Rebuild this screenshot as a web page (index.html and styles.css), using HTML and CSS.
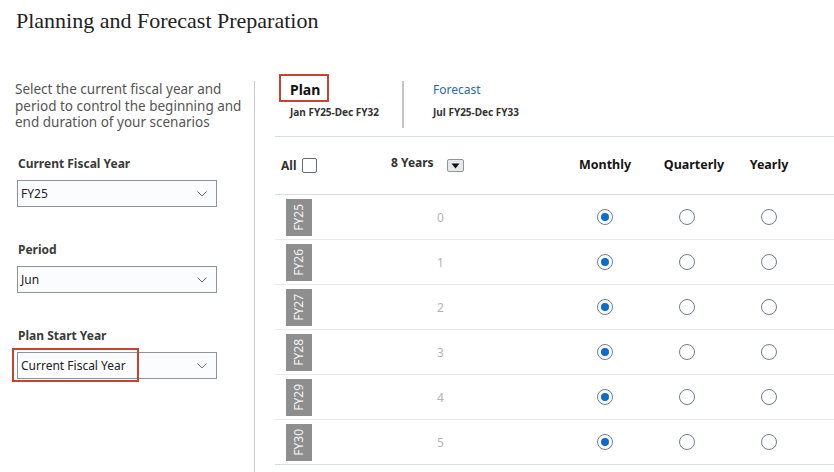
FILE: index.html
```html
<!DOCTYPE html>
<html>
<head>
<meta charset="utf-8">
<link rel="stylesheet" href="styles.css">
</head>
<body>
<h1 class="title">Planning and Forecast Preparation</h1>
<div class="main">
  <div class="left">
    <p class="desc">Select the current fiscal year and period to control the beginning and end duration of your scenarios</p>
    <div class="field">
      <div class="label">Current Fiscal Year</div>
      <div class="select"><span>FY25</span><svg class="chev" width="10" height="6" viewBox="0 0 10 6"><path d="M0.5 0.5 L5 5 L9.5 0.5" fill="none" stroke="#707070" stroke-width="1"/></svg></div>
    </div>
    <div class="field">
      <div class="label">Period</div>
      <div class="select"><span>Jun</span><svg class="chev" width="10" height="6" viewBox="0 0 10 6"><path d="M0.5 0.5 L5 5 L9.5 0.5" fill="none" stroke="#707070" stroke-width="1"/></svg></div>
    </div>
    <div class="field">
      <div class="label">Plan Start Year</div>
      <div class="select marked"><span>Current Fiscal Year</span><svg class="chev" width="10" height="6" viewBox="0 0 10 6"><path d="M0.5 0.5 L5 5 L9.5 0.5" fill="none" stroke="#707070" stroke-width="1"/></svg><div class="redbox sel-box"></div></div>
    </div>
  </div>
  <div class="right">
    <div class="tabs">
      <div class="tab tab-plan">
        <div class="tab-title plan">Plan<div class="redbox plan-box"></div></div>
        <div class="tab-sub">Jan FY25-Dec FY32</div>
      </div>
      <div class="tab-sep"></div>
      <div class="tab tab-fc">
        <div class="tab-title fc">Forecast</div>
        <div class="tab-sub">Jul FY25-Dec FY33</div>
      </div>
    </div>
    <div class="grid">
      <div class="row head">
        <div class="c1"><span class="all">All</span><span class="checkbox"></span></div>
        <div class="c2"><span class="yrs">8 Years</span><span class="ddbtn"><svg width="9" height="6" viewBox="0 0 9 6"><path d="M0.5 0.5 H8.5 L4.5 5.5 Z" fill="#111"/></svg></span></div>
        <div class="c3"></div>
        <div class="cr h">Monthly</div>
        <div class="cr h quarter">Quarterly</div>
        <div class="cr h">Yearly</div>
        <div></div>
      </div>
      <div class="row">
        <div class="c1"><span class="badge"><span>FY25</span></span></div>
        <div class="c2 num">0</div><div class="c3"></div>
        <div class="cr"><span class="radio on"></span></div>
        <div class="cr"><span class="radio"></span></div>
        <div class="cr"><span class="radio"></span></div><div></div>
      </div>
      <div class="row">
        <div class="c1"><span class="badge"><span>FY26</span></span></div>
        <div class="c2 num">1</div><div class="c3"></div>
        <div class="cr"><span class="radio on"></span></div>
        <div class="cr"><span class="radio"></span></div>
        <div class="cr"><span class="radio"></span></div><div></div>
      </div>
      <div class="row">
        <div class="c1"><span class="badge"><span>FY27</span></span></div>
        <div class="c2 num">2</div><div class="c3"></div>
        <div class="cr"><span class="radio on"></span></div>
        <div class="cr"><span class="radio"></span></div>
        <div class="cr"><span class="radio"></span></div><div></div>
      </div>
      <div class="row">
        <div class="c1"><span class="badge"><span>FY28</span></span></div>
        <div class="c2 num">3</div><div class="c3"></div>
        <div class="cr"><span class="radio on"></span></div>
        <div class="cr"><span class="radio"></span></div>
        <div class="cr"><span class="radio"></span></div><div></div>
      </div>
      <div class="row">
        <div class="c1"><span class="badge"><span>FY29</span></span></div>
        <div class="c2 num">4</div><div class="c3"></div>
        <div class="cr"><span class="radio on"></span></div>
        <div class="cr"><span class="radio"></span></div>
        <div class="cr"><span class="radio"></span></div><div></div>
      </div>
      <div class="row last">
        <div class="c1"><span class="badge"><span>FY30</span></span></div>
        <div class="c2 num">5</div><div class="c3"></div>
        <div class="cr"><span class="radio on"></span></div>
        <div class="cr"><span class="radio"></span></div>
        <div class="cr"><span class="radio"></span></div><div></div>
      </div>
    </div>
  </div>
</div>
</body>
</html>
```
FILE: styles.css
```css
html, body {
  margin: 0;
  padding: 0;
  background: #fff;
  overflow: hidden;
}
body {
  width: 834px;
  height: 472px;
  font-family: "Noto Sans", "Open Sans", sans-serif;
  color: #333;
}
.title {
  font-family: "Liberation Serif", "DejaVu Serif", serif;
  font-weight: normal;
  font-size: 22px;
  line-height: 24px;
  color: #222;
  margin: 9px 0 0 16px;
}
.main {
  display: flex;
  margin-top: 48px;
  height: 391px;
}
.left {
  width: 239px;
  padding-left: 15px;
  border-right: 1px solid #c9c9c9;
}
.desc {
  margin: 0;
  font-size: 13.5px;
  line-height: 16.5px;
  color: #555;
  width: 230px;
}
.field {
  margin-top: 35px;
}
.field:first-of-type {
  margin-top: 25px;
}
.label {
  font-size: 12px;
  font-weight: bold;
  line-height: 16px;
  color: #3a3a3a;
  margin-left: 3px;
  margin-bottom: 8px;
}
.select {
  position: relative;
  margin-left: 2px;
  height: 25px;
  border: 1px solid #8d949c;
  background: #fbfcfe;
  display: flex;
  align-items: center;
  justify-content: space-between;
  padding: 0 9px 0 3px;
  box-sizing: content-box;
  width: 186px;
  font-size: 12px;
  color: #222;
}
.chev {
  margin-top: 1px;
}
.redbox {
  position: absolute;
  border: 2px solid #c8432f;
  box-sizing: border-box;
}
.sel-box {
  left: -6px;
  top: -5px;
  width: 127px;
  height: 34px;
}
.right {
  flex: 1;
  padding-left: 20px;
}
.tabs {
  display: flex;
  height: 47px;
  padding-bottom: 8px;
  border-bottom: 1px solid #d8dee5;
}
.tab {
  display: flex;
  flex-direction: column;
}
.tab-plan {
  width: 112px;
  padding-left: 15px;
}
.tab-sep {
  width: 2px;
  background: #c4c4c4;
  height: 47px;
}
.tab-fc {
  padding-left: 29px;
}
.tab-title {
  position: relative;
  line-height: 18px;
  height: 18px;
}
.plan {
  font-size: 14px;
  font-weight: bold;
  color: #111;
}
.plan-box {
  left: -11px;
  top: -7px;
  width: 50px;
  height: 28px;
}
.fc {
  font-size: 12px;
  color: #2a6aaa;
}
.tab-sub {
  margin-top: 6px;
  font-size: 10px;
  font-weight: bold;
  line-height: 14px;
  color: #333;
}
.grid {
  display: flex;
  flex-direction: column;
}
.row {
  display: grid;
  grid-template-columns: 110px 111px 68px 82px 82px 82px 1fr;
  height: 44px;
  border-bottom: 1px solid #e8eaec;
  align-items: center;
}
.row.head {
  height: 57px;
  border-bottom: 1px solid #d8dee5;
}
.row.last {
  border-bottom: 1px solid #d6dce3;
}
.c1 {
  padding-left: 11px;
  display: flex;
  align-items: center;
}
.head .c1 {
  padding-left: 6px;
}
.all {
  font-size: 12px;
  font-weight: bold;
  color: #333;
  margin-right: 6px;
}
.checkbox {
  width: 13px;
  height: 13px;
  border: 1px solid #5e6c7c;
  border-radius: 2px;
  background: #fff;
}
.c2 {
  padding-left: 6px;
  display: flex;
  align-items: center;
}
.yrs {
  font-size: 12px;
  font-weight: bold;
  color: #333;
  margin-top: -6px;
}
.ddbtn {
  margin-left: 13px;
  width: 15px;
  height: 11px;
  border: 1px solid #8e959d;
  border-radius: 2px;
  background: #e6e8eb;
  display: flex;
  align-items: center;
  justify-content: center;
}
.num {
  padding-left: 0;
  justify-content: center;
  font-size: 12px;
  color: #b3b3b3;
}
.cr {
  display: flex;
  justify-content: center;
  align-items: center;
}
.cr.h {
  font-size: 12.5px;
  font-weight: bold;
  color: #161513;
  margin-top: -2px;
}
.cr.quarter {
  padding-left: 14px;
}
.badge {
  width: 26px;
  height: 37px;
  background: #8e8e8e;
  display: flex;
  align-items: center;
  justify-content: center;
}
.badge span {
  writing-mode: vertical-rl;
  transform: rotate(180deg);
  font-size: 12px;
  color: #f2f2f2;
  line-height: 14px;
}
.radio {
  width: 14px;
  height: 14px;
  border: 1px solid #737c92;
  border-radius: 50%;
  display: flex;
  align-items: center;
  justify-content: center;
  background: #fff;
}
.radio.on::after {
  content: "";
  width: 8px;
  height: 8px;
  border-radius: 50%;
  background: #0a6ccb;
}
```
